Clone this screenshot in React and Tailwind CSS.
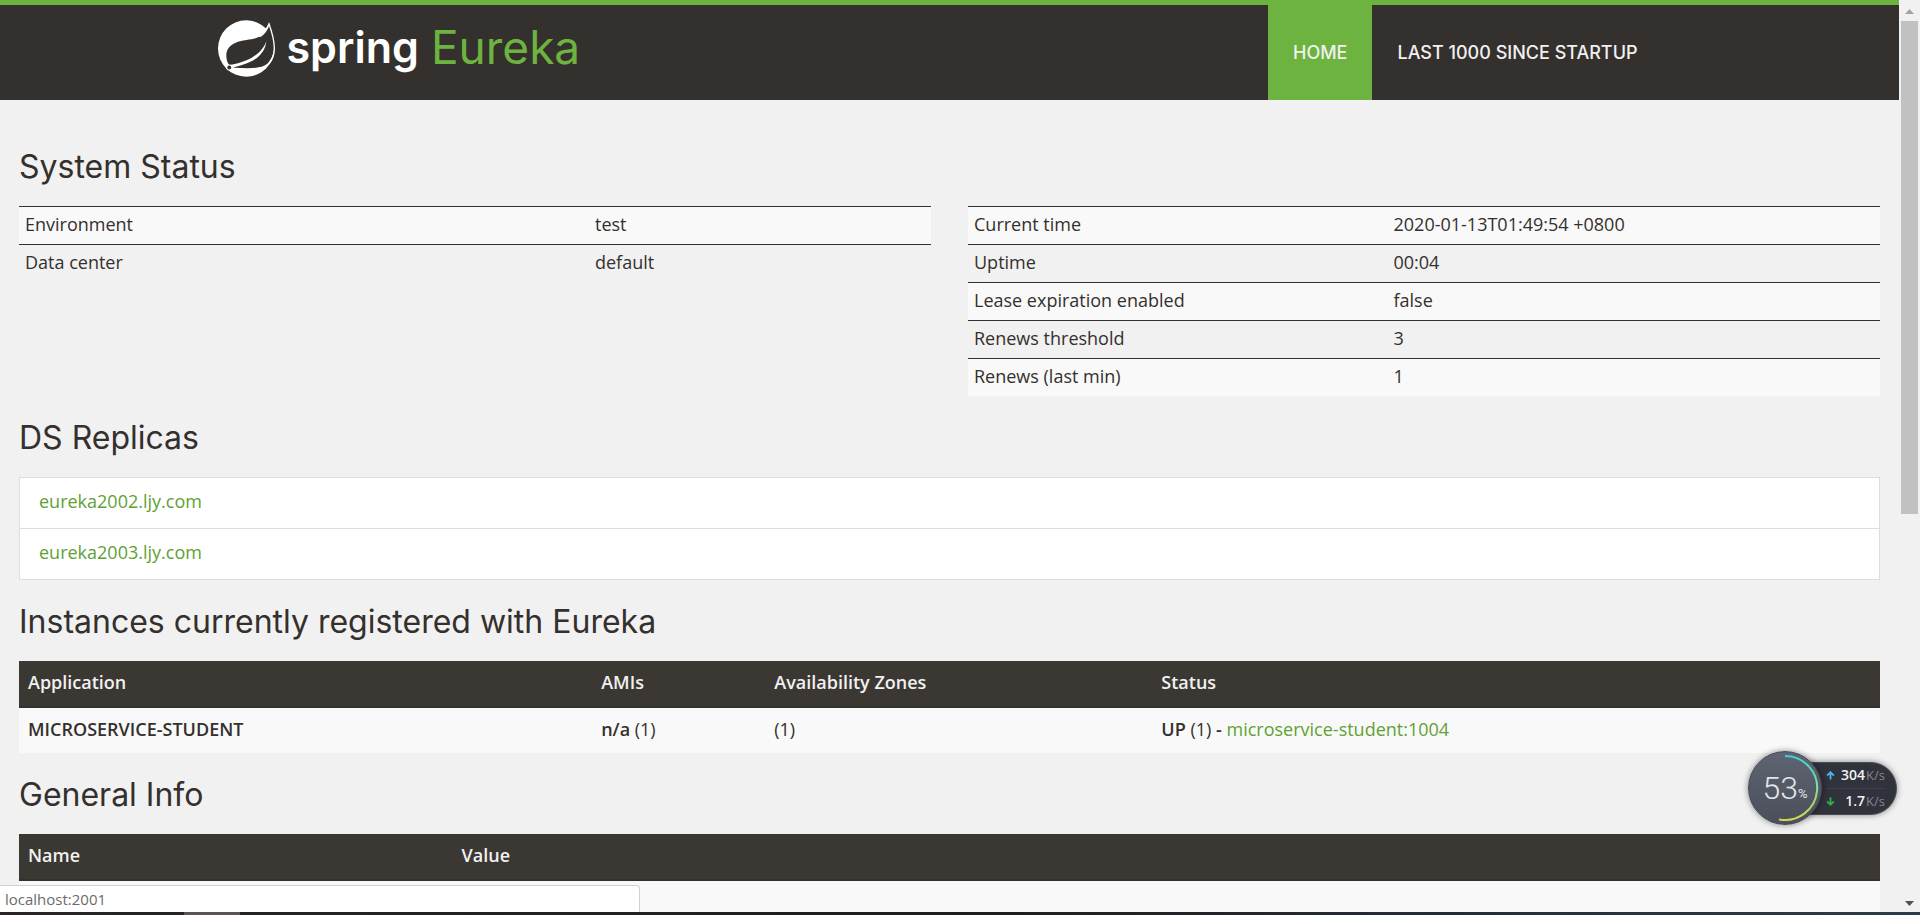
/* eslint-disable react/prop-types */

const environment = [
  ["Environment", "test"],
  ["Data center", "default"],
];

const runtime = [
  ["Current time", "2020-01-13T01:49:54 +0800"],
  ["Uptime", "00:04"],
  ["Lease expiration enabled", "false"],
  ["Renews threshold", "3"],
  ["Renews (last min)", "1"],
];

const replicas = ["eureka2002.ljy.com", "eureka2003.ljy.com"];

const SpringLeaf = () => (
  <svg viewBox="12 12 172 172" className="w-[57px] h-[57px]" aria-hidden="true">
    <circle cx="97" cy="98" r="85" fill="#fff" />
    <path
      d="M166 26 C152 62 128 69 98 72 C60 76 37 92 37 118 C37 134 42 145 50 152 L64 156 C105 158 146 160 163 142 C190 110 184 68 166 26 Z"
      fill="#34302d"
    />
    <path
      d="M166 24 C160 44 152 54 138 62 L148 48 C158 40 163 32 166 24 C176 52 182 74 182 98 C182 116 177 131 166 144"
      fill="none"
      stroke="#fff"
      strokeWidth="4"
    />
    <path
      d="M158 75 C150 101 126 121 100 133 C80 141 64 146 46 148 L56 155 C72 152 92 147 108 139 C138 125 155 104 158 75 Z"
      fill="#fff"
    />
    <circle cx="46" cy="155" r="9" fill="#fff" />
    <circle cx="46" cy="155" r="6" fill="#34302d" />
  </svg>
);

const Header = () => (
  <header className="bg-[#34302d] border-t-[5px] border-[#6db33f]">
    <div className="flex justify-between items-stretch mx-auto max-w-[1464px] h-[95px] pr-[19px]">
      <a href="#home" className="flex items-start pt-[15px] text-white">
        <SpringLeaf />
        <span className="ml-3 font-['Inter',sans-serif] text-[43px] leading-[54px] font-semibold">spring</span>
        <span className="ml-3 font-['Inter',sans-serif] text-[46px] leading-[54px] text-[#6db33f]">Eureka</span>
      </a>
      <nav className="flex font-['Inter',sans-serif] text-lg font-medium text-[#f1f1f1]">
        <a href="#home" className="flex items-center px-[25px] bg-[#6db33f]">HOME</a>
        <a href="#lastn" className="flex items-center px-[25px]">LAST 1000 SINCE STARTUP</a>
      </nav>
    </div>
  </header>
);

const Title = ({ children }) => (
  <h1 className="mt-6 mb-[21px] font-['Inter',sans-serif] text-[32px] leading-9 font-normal">{children}</h1>
);

const StatusTable = ({ rows, labelWidth }) => (
  <table className="flex-1 self-start table-fixed border-collapse">
    <tbody className="block">
      {rows.map(([name, value]) => (
        <tr key={name} className="flex border-t border-[#34302d] odd:bg-[#f9f9f9]">
          <td className={`${labelWidth} pt-[5px] pb-2 px-[6px]`}>{name}</td>
          <td className="pt-[5px] pb-2 px-[6px]">{value}</td>
        </tr>
      ))}
    </tbody>
  </table>
);

const Th = ({ width, children }) => (
  <th className={`${width} pt-[9px] pb-3 px-[9px] text-left font-semibold`}>{children}</th>
);

const Td = ({ children }) => <td className="pt-[9px] pb-3 px-[9px]">{children}</td>;

const Scrollbar = () => (
  <div className="flex flex-col items-center w-[21px] bg-[#f1f1f1]">
    <svg viewBox="0 0 9 5" className="w-[9px] h-[5px] mt-[9px] mb-[7px]" aria-hidden="true">
      <path d="M0 5 L4.5 0 L9 5 Z" fill="#a3a3a3" />
    </svg>
    <div className="flex-1 w-[17px]">
      <div className="h-[56%] bg-[#c1c1c1]"></div>
    </div>
    <svg viewBox="0 0 9 5" className="w-[9px] h-[5px] mb-[6px]" aria-hidden="true">
      <path d="M0 0 L4.5 5 L9 0 Z" fill="#505050" />
    </svg>
  </div>
);

const Speed = ({ value, color, down }) => (
  <div className="flex flex-1 items-center justify-end">
    <svg viewBox="0 0 10 10" className={down ? "w-[9px] h-[9px] mr-auto rotate-180" : "w-[9px] h-[9px] mr-auto"} aria-hidden="true">
      <path d="M5 9.5 V2 M1.2 5.2 L5 1.4 L8.8 5.2" fill="none" stroke={color} strokeWidth="2" />
    </svg>
    <span className="text-[14px] leading-4 font-semibold text-[#f1f1f1]">{value}</span>
    <span className="ml-px text-[13px] leading-4 text-[#85878f]">K/s</span>
  </div>
);

const SpeedBall = () => (
  <div className="absolute right-[23px] bottom-[90px] flex items-center font-['Open_Sans',sans-serif]">
    <div className="relative z-10 flex items-center justify-center w-[74px] h-[74px] rounded-full border border-[#454955] bg-linear-to-b from-[#5f6472] to-[#4b4f5c] text-[#e4e5e8] shadow-[0_0_6px_rgba(0,0,0,0.45)]">
      <svg viewBox="0 0 74 74" className="absolute -inset-px w-[74px] h-[74px]" aria-hidden="true">
        <defs>
          <linearGradient id="usage" x1="0" y1="0" x2="0" y2="1">
            <stop offset="0" stopColor="#3fd0d8" />
            <stop offset="0.5" stopColor="#7fe39a" />
            <stop offset="1" stopColor="#d6d44a" />
          </linearGradient>
        </defs>
        <path d="M37 5 A32 32 0 1 1 31 68.4" fill="none" stroke="url(#usage)" strokeWidth="2" />
      </svg>
      <span className="font-['Roboto',sans-serif] text-[32px] leading-9 font-light">53</span>
      <span className="mt-3 font-['Roboto',sans-serif] text-[13px] leading-4">%</span>
    </div>
    <div className="flex flex-col w-[112px] h-[53px] -ml-[37px] pl-[40px] pr-[11px] rounded-r-full border border-[#4a4c58] bg-[#30323c] shadow-[0_0_6px_rgba(0,0,0,0.45)]">
      <Speed value="304" color="#4db2f5" />
      <div className="h-px bg-[#3d3f4a]"></div>
      <Speed value="1.7" color="#2fb344" down />
    </div>
  </div>
);

const App = () => {
  return (
    <div className="relative flex flex-col h-screen overflow-hidden bg-[#f1f1f1] font-['Open_Sans',sans-serif] text-lg leading-6 text-[#34302d]">
      <div className="flex flex-1 min-h-0">
        <div className="flex-1 overflow-hidden">
          <Header />
          <main className="px-[19px] pt-[25px]">
            <Title>System Status</Title>
            <div className="flex gap-[37px]">
              <StatusTable rows={environment} labelWidth="w-[62.5%]" />
              <StatusTable rows={runtime} labelWidth="w-[46%]" />
            </div>

            <Title>DS Replicas</Title>
            <ul className="border border-[#dddddd] bg-white divide-y divide-[#dddddd]">
              {replicas.map((host) => (
                <li key={host} className="px-[19px] pt-[11px] pb-[15px]">
                  <a href={`#${host}`} className="text-[#5fa134]">{host}</a>
                </li>
              ))}
            </ul>

            <Title>Instances currently registered with Eureka</Title>
            <table className="w-full table-fixed border-separate border-spacing-0">
              <thead className="bg-[#3b3833] text-[#f1f1f1] [&_th]:border-b-2 [&_th]:border-[#34302d]">
                <tr>
                  <Th width="w-[30.8%]">Application</Th>
                  <Th width="w-[9.3%]">AMIs</Th>
                  <Th width="w-[20.8%]">Availability Zones</Th>
                  <Th width="w-[39.1%]">Status</Th>
                </tr>
              </thead>
              <tbody>
                <tr className="bg-[#f9f9f9]">
                  <Td><b className="font-semibold">MICROSERVICE-STUDENT</b></Td>
                  <Td><b className="font-semibold">n/a</b> (1)</Td>
                  <Td>(1)</Td>
                  <Td>
                    <b className="font-semibold">UP</b> (1) <b className="font-semibold">-</b>{" "}
                    <a href="#info" className="text-[#5fa134]">microservice-student:1004</a>
                  </Td>
                </tr>
              </tbody>
            </table>

            <Title>General Info</Title>
            <table className="w-full table-fixed border-separate border-spacing-0">
              <thead className="bg-[#3b3833] text-[#f1f1f1] [&_th]:border-b-2 [&_th]:border-[#34302d]">
                <tr>
                  <Th width="w-[23.3%]">Name</Th>
                  <Th width="w-[76.7%]">Value</Th>
                </tr>
              </thead>
              <tbody>
                <tr className="h-[45px] bg-[#f9f9f9]">
                  <td></td>
                  <td></td>
                </tr>
              </tbody>
            </table>
          </main>
        </div>
        <Scrollbar />
      </div>

      <div className="absolute left-0 bottom-[3px] w-1/3 h-[27px] px-[5px] pt-px border-t border-r border-[#d0d0d0] rounded-tr bg-white text-[15px] leading-6 text-[#6b6b6b]">
        localhost:2001
      </div>
      <SpeedBall />

      <div className="flex h-[3px] bg-linear-to-r from-[#2b2324] via-[#1d1d20] to-[#2b3d4a]">
        <div className="w-14 ml-[184px] bg-[#5a5253]"></div>
      </div>
    </div>
  );
};

export default App;
